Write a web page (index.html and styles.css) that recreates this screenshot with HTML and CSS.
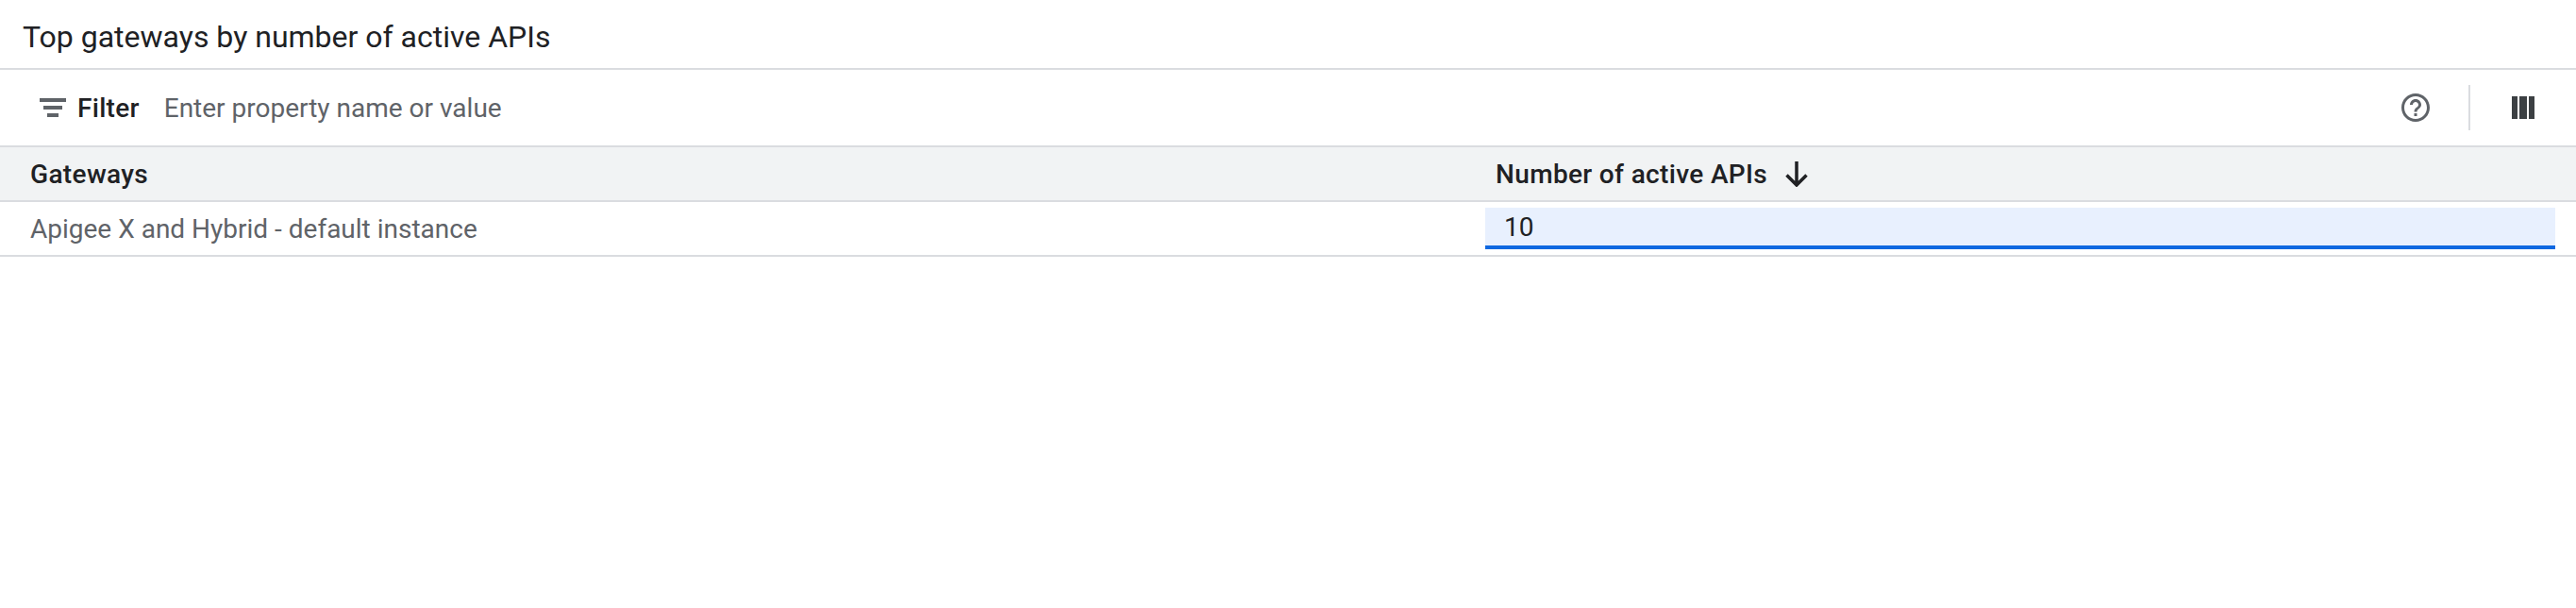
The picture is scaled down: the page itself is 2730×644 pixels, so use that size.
FILE: index.html
```html
<!DOCTYPE html>
<html lang="en">
<head>
<meta charset="utf-8">
<title>Top gateways</title>
<link rel="stylesheet" href="styles.css">
</head>
<body>
<main class="card">
  <h1 class="title">Top gateways by number of active APIs</h1>
  <div class="toolbar">
    <div class="filter">
      <svg class="filter-icon" width="28" height="20" viewBox="0 0 28 20"><path fill="#5f6368" d="M0 0h28v4H0zM4 8h20v4H4zM8 16h12v4H8z"/></svg>
      <span class="filter-label">Filter</span>
    </div>
    <span class="placeholder">Enter property name or value</span>
    <div class="tools">
      <svg class="help" width="36" height="36" viewBox="0 0 24 24"><path fill="#5f6368" d="M11 18h2v-2h-2v2zm1-16C6.480 2 2 6.480 2 12s4.480 10 10 10 10-4.480 10-10S17.520 2 12 2zm0 18c-4.410 0-8-3.590-8-8s3.590-8 8-8 8 3.590 8 8-3.590 8-8 8zm0-14c-2.210 0-4 1.790-4 4h2c0-1.100.9-2 2-2s2 .9 2 2c0 2-3 1.750-3 5h2c0-2.250 3-2.500 3-5 0-2.210-1.790-4-4-4z"/></svg>
      <span class="divider"></span>
      <svg class="columns" width="24" height="24" viewBox="0 0 24 24"><path fill="#3c4043" d="M0 0h6v24H0zM8 0h8v24H8zM18 0h6v24h-6z"/></svg>
    </div>
  </div>
  <div class="table">
    <div class="head">
      <div class="head-cell first">Gateways</div>
      <div class="head-cell second">Number of active APIs
        <svg class="sort" width="24" height="27" viewBox="0 0 24 27"><path fill="none" stroke="#202124" stroke-width="3.500" d="M12 0v24M1.500 14.500 12 25l10.500-10.500"/></svg>
      </div>
    </div>
    <div class="row">
      <div class="cell name">Apigee X and Hybrid - default instance</div>
      <div class="cell value"><span class="value-text">10</span></div>
    </div>
  </div>
</main>
</body>
</html>
```
FILE: styles.css
```css
* { box-sizing: border-box; }
html, body { margin: 0; height: 100%; background: #fff; }
body { font-family: Roboto, "Liberation Sans", sans-serif; color: #202124; }
.card { height: 644px; overflow: hidden; background: #fff; }
.title {
  margin: 0; height: 74px; padding: 6px 0 0 24px;
  display: flex; align-items: center;
  font-size: 32px; font-weight: 400; color: #202124;
  border-bottom: 2px solid #dadce0;
}
.toolbar {
  height: 82px; display: flex; align-items: center;
  border-bottom: 2px solid #dadce0; padding: 0 44px 0 42px;
}
.filter { display: flex; align-items: center; gap: 12px; }
.filter-label { font-size: 28px; font-weight: 500; letter-spacing: 0.3px; color: #202124; }
.placeholder { margin-left: 26px; font-size: 28px; color: #5f6368; }
.tools { margin-left: auto; display: flex; align-items: center; }
.divider { width: 2px; height: 48px; background: #dadce0; margin: 0 44px 0 38px; }
.head {
  display: grid; grid-template-columns: 1574px 1fr; height: 58px;
  background: #f1f3f4; border-bottom: 2px solid #dadce0;
}
.head-cell { display: flex; align-items: center; font-size: 28px; font-weight: 500; letter-spacing: 0.35px; color: #202124; }
.first { padding-left: 32px; }
.second { padding-left: 11px; gap: 19px; }
.row {
  display: grid; grid-template-columns: 1574px 1fr; height: 58px;
  border-bottom: 2px solid #dadce0;
}
.cell { font-size: 28px; display: flex; align-items: center; }
.name { padding-left: 32px; color: #5f6368; }
.value {
  margin: 6px 22px 6px 0; background: #e8f0fe;
  border-bottom: 4px solid #0f68e0; padding-left: 20px; color: #202124;
}
```
